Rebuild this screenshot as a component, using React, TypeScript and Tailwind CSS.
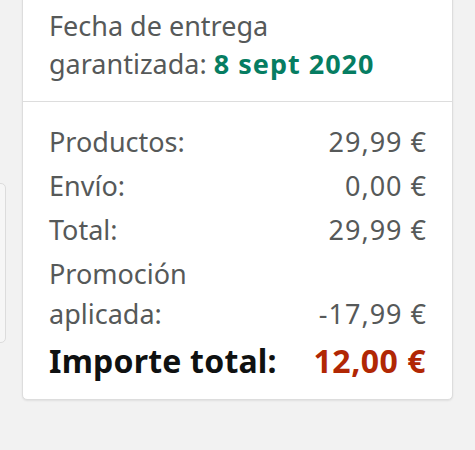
export default function App() {
  const rows: { label: string[]; value: string }[] = [
    { label: ["Productos:"], value: "29,99 €" },
    { label: ["Envío:"], value: "0,00 €" },
    { label: ["Total:"], value: "29,99 €" },
    { label: ["Promoción", "aplicada:"], value: "-17,99 €" },
  ];
  return (
    <div
      className="relative w-[475px] h-[450px] overflow-hidden bg-[#f2f2f2]"
      style={{ fontFamily: '"Noto Sans", "Open Sans", sans-serif' }}
    >
      <div className="absolute left-[-20px] top-[183px] w-[26px] h-[160px] rounded-[5px] border border-[#dcdcdc] bg-[#f6f6f6]" />
      <div className="ml-[22px] w-[431px] -mt-[10px] rounded-[5px] border border-[#dddddd] bg-white shadow-[0_1px_2px_rgba(0,0,0,0.08)]">
        <div className="pl-[26px] pr-[20px] pt-[16px] pb-[18px] text-[27px] leading-[38px] text-[#565959]">
          <div>Fecha de entrega</div>
          <div>
            garantizada: <span className="font-bold text-[#067d62] tracking-[1px]">8 sept 2020</span>
          </div>
        </div>
        <div className="h-px bg-[#dddddd]" />
        <div className="pl-[26px] pr-[26px] pt-[20px] pb-[18px] flex flex-col gap-[4px] text-[27px] leading-[40px] text-[#565959]">
          {rows.map((r, i) => (
            <div key={i} className="flex justify-between items-end">
              <div>
                {r.label.map((l, j) => (
                  <div key={j}>{l}</div>
                ))}
              </div>
              <div className="tracking-[1px] -mr-[1px]">{r.value}</div>
            </div>
          ))}
          <div className="flex justify-between items-end mt-[3px] text-[32px] leading-[40px] font-bold">
            <div className="text-[#0f1111] tracking-[0.2px]">Importe total:</div>
            <div className="text-[#b12704] tracking-[0.5px]">12,00 €</div>
          </div>
        </div>
      </div>
    </div>
  );
}
